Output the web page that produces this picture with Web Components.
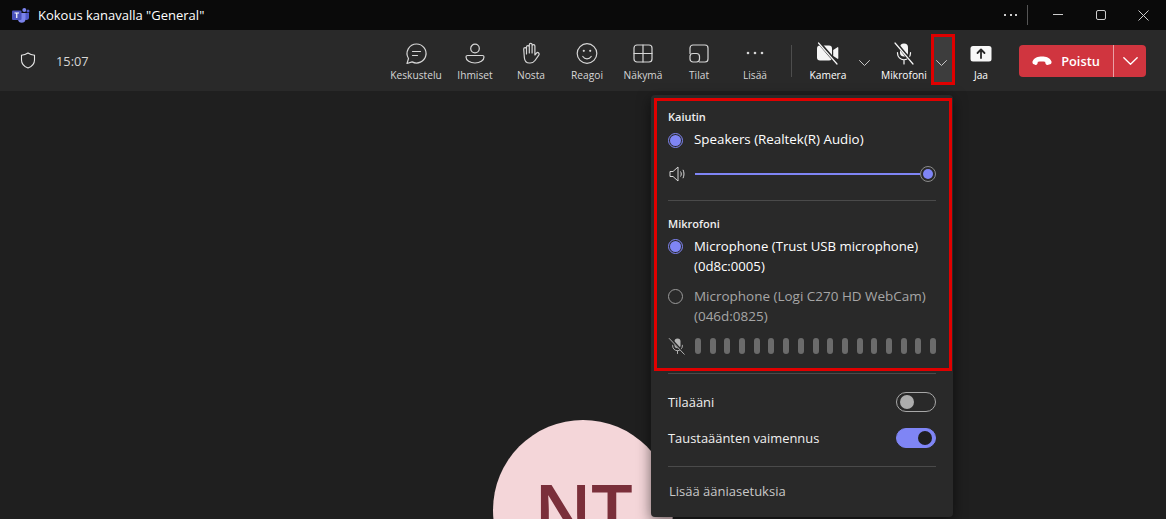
<!doctype html>
<html lang="fi"><head><meta charset="utf-8"><title>Kokous</title>
<style>
html,body{margin:0;height:100%;background:#1f1f1f;overflow:hidden}
body{font-family:"Open Sans","Noto Sans",sans-serif;color:#fff;position:relative}
teams-app{display:flex}
</style></head><body>
<teams-app></teams-app>
<script>
const I={
chat:'<path d="M12.500 2a9.500 9.500 0 1 1-4.400 17.900L3 21.500l1.500-5A9.500 9.500 0 0 1 12.500 2Z"/><path d="M8.500 9.500h8M8.500 13.500h5"/>',
people:'<circle cx="12" cy="6.500" r="4.300"/><path d="M4.500 13.500h15c.8 0 1.500.7 1.500 1.500 0 3.500-4 6-9 6s-9-2.500-9-6c0-.8.7-1.500 1.500-1.500Z"/>',
hand:'<path d="M7.500 12V5a1.400 1.400 0 0 1 2.800 0v6V2.800a1.400 1.400 0 0 1 2.800 0V11V4a1.400 1.400 0 0 1 2.800 0V13l1.600-1.900a1.500 1.500 0 0 1 2.300 2l-3.800 5.400a6 6 0 0 1-4.800 2.500h-.8c-3 0-4.700-2-5-5L4.700 7a1.400 1.400 0 0 1 2.800 0Z"/>',
smile:'<circle cx="12" cy="11.500" r="9.800"/><path d="M7.800 14.500c1 1.500 2.600 2.300 4.200 2.300s3.200-.8 4.200-2.300"/><circle cx="8.800" cy="8.800" r="1.100" fill="#d6d6d6" stroke="none"/><circle cx="15.200" cy="8.800" r="1.100" fill="#d6d6d6" stroke="none"/>',
grid:'<rect x="3" y="3" width="18" height="17" rx="3"/><path d="M12 3v17M3 11.500h18"/>',
rooms:'<path d="M6 3h12a3 3 0 0 1 3 3v11a3 3 0 0 1-3 3h-5.500M3 11.500V6a3 3 0 0 1 3-3"/><rect x="3" y="11.500" width="9.500" height="8.500" rx="3"/>',
more:'<circle cx="5" cy="11" r="1.300" fill="#d6d6d6" stroke="none"/><circle cx="12" cy="11" r="1.300" fill="#d6d6d6" stroke="none"/><circle cx="19" cy="11" r="1.300" fill="#d6d6d6" stroke="none"/>',
cam:'<rect x="1" y="3.500" width="15" height="15" rx="3" fill="#f5f5f5" stroke="none"/><path d="M17.200 8l4.300-2.800c.4-.2.800 0 .8.500v10.600c0 .5-.4.700-.8.500l-4.300-2.800Z" fill="#f5f5f5" stroke="none"/><path d="M3 .500 21.500 22" stroke="#292929" stroke-width="3.400"/><path d="M2.500 1 21 22" stroke="#f5f5f5" stroke-width="1.200"/>',
mic:'<rect x="8" y="1.500" width="8" height="13" rx="4" fill="#f5f5f5" stroke="none"/><path d="M5.500 10.500v.8a6.500 6.500 0 0 0 13 0v-.8M12 18v4" stroke="#f5f5f5"/><path d="M3.500 .500 21.500 22" stroke="#292929" stroke-width="3.200"/><path d="M3 1 21 22" stroke="#f5f5f5" stroke-width="1.200"/>',
share:'<rect x="1.500" y="4" width="21" height="15.500" rx="2.500" fill="#f7f7f7" stroke="none"/><path d="M12 16V8M8.500 11 12 7.500l3.500 3.500" stroke="#292929" stroke-width="1.800"/>'
};
const svg=(k,s=24)=>`<svg width="${s}" height="${s}" viewBox="0 0 24 24" fill="none" stroke="#d6d6d6" stroke-width="1.200" stroke-linecap="round" stroke-linejoin="round">${I[k]}</svg>`;
const chev=(w=11,c="#c8c8c8")=>`<svg width="${w}" height="${Math.round(w*.55)}" viewBox="0 0 11 6" fill="none" stroke="${c}" stroke-width="1" stroke-linecap="round" stroke-linejoin="round" style="display:block"><path d="M.5.5 5.500 5.500 10.500.5"/></svg>`;
function def(name,css,html){
  customElements.define(name,class extends HTMLElement{
    connectedCallback(){
      if(this.shadowRoot)return;
      const r=this.attachShadow({mode:"open"});
      r.innerHTML=`<style>${css}</style>`+(typeof html==="function"?html(this):html);
    }
  });
}
def("title-bar",`:host{display:flex;align-items:center;height:30px;background:#0a0a0a;box-sizing:border-box;padding-left:12px;padding-right:1px}
.t{margin-left:8px;font-size:13px;color:#fff;white-space:nowrap;flex:1;line-height:30px}
.dots{display:flex;gap:3.500px}.dots i{width:2px;height:2px;background:#ccc;display:block}
.sep{width:1px;height:20px;background:#555;margin:0 8px 0 10px}
.b{width:43px;height:30px;display:flex;align-items:center;justify-content:center}
svg{display:block}`,
`<svg width="18" height="16" viewBox="0 0 18 16"><circle cx="12.300" cy="3" r="2" fill="#7b83eb"/><circle cx="16" cy="4" r="1.500" fill="#5059c9"/><path d="M9 6h8v5a2.500 2.500 0 0 1-4 1.500H9Z" fill="#5059c9"/><path d="M6 6h7.500v6.500a3.800 3.800 0 0 1-7.500 0Z" fill="#7b83eb"/><rect x="0" y="3.500" width="9.500" height="9.500" rx="1" fill="#4b53bc"/><path d="M2.500 6h4.500M4.750 6v5" stroke="#fff" stroke-width="1.200"/></svg>
<span class="t">Kokous kanavalla "General"</span>
<span class="dots"><i></i><i></i><i></i></span><span class="sep"></span>
<span class="b"><svg width="10" height="2"><path d="M0 .5h10" stroke="#ccc"/></svg></span>
<span class="b"><svg width="10" height="10"><rect x=".5" y=".5" width="9" height="9" rx="1.500" fill="none" stroke="#ccc"/></svg></span>
<span class="b"><svg width="11" height="11"><path d="M.5.5l10 10M10.500.5l-10 10" stroke="#ccc"/></svg></span>`);
def("tool-button",`:host{display:flex;flex-direction:column;align-items:center;height:61px;box-sizing:border-box;padding-top:12px;width:var(--w,56px);flex:none}
svg{display:block;width:24px;height:24px}
.l{font-size:10.200px;line-height:14px;margin-top:2px;color:var(--c,#d6d6d6);white-space:nowrap;font-weight:var(--fw,400)}`,
h=>`${svg(h.getAttribute("icon"))}<span class="l">${h.getAttribute("label")}</span>`);
def("drop-chevron",`:host{display:flex;align-items:center;justify-content:center;width:24px;height:61px;padding-top:4px;box-sizing:border-box;flex:none}`,()=>chev(11));
def("mic-chevron",`:host{display:block;width:24px;height:51px;box-sizing:border-box;border:3px solid #e00000;margin:4px 2px 0 -1px;align-self:flex-start;background:#3d3d3d;flex:none;padding:0}
.i{display:flex;height:100%;align-items:center;justify-content:center;padding:6px 4px 0 0;box-sizing:border-box}`,()=>`<div class="i">${chev(11)}</div>`);
def("leave-button",`:host{display:flex;height:32px;width:127px;background:#d0353f;border-radius:4px;flex:none;align-items:stretch;color:#fff}
.m{flex:1;display:flex;align-items:center;justify-content:center;gap:9px;font-size:12.800px;font-weight:600}
.s{width:32px;border-left:1px solid #e9a0a5;display:flex;align-items:center;justify-content:center}
svg{display:block}`,
`<div class="m"><svg width="20" height="10" viewBox="0 0 20 10"><path d="M.5 5.500C2 1.500 6 .5 10 .5s8 1 9.500 5c.3 1-.2 2.500-1.500 2.800l-2.500.6c-1 .2-1.700-.3-2-1.300l-.4-1.800c-1.500-.5-5.700-.5-7.200 0l-.4 1.800c-.3 1-1 1.500-2 1.300L2 8.300C.7 8 .2 6.500.5 5.500Z" fill="#fff"/></svg><span>Poistu</span></div><div class="s">${chev(15,"#fff")}</div>`);
def("call-toolbar",`:host{display:flex;align-items:center;height:61px;background:#292929;padding-left:20px;padding-right:20px;box-sizing:border-box}
.time{margin-left:20px;font-size:12.800px;color:#d6d6d6;flex:1}
.sep{width:1px;height:32px;background:#4d4d4d;margin:0 12px 0 8px;flex:none}
.right{display:flex;align-items:center;flex:none}
svg.sh{display:block}
leave-button{margin-left:14px}`,
`<svg class="sh" width="16" height="17" viewBox="0 0 16 17" fill="none" stroke="#e6e6e6" stroke-width="1.100"><path d="M8 1c2 1.300 4 2 6.500 2.300V8c0 4-2.500 6.500-6.500 8-4-1.500-6.500-4-6.500-8V3.300C4 3 6 2.300 8 1Z"/></svg>
<span class="time">15:07</span>
<div class="right">
<tool-button icon="chat" label="Keskustelu" style="--w:62px"></tool-button>
<tool-button icon="people" label="Ihmiset"></tool-button>
<tool-button icon="hand" label="Nosta"></tool-button>
<tool-button icon="smile" label="Reagoi"></tool-button>
<tool-button icon="grid" label="Näkymä"></tool-button>
<tool-button icon="rooms" label="Tilat"></tool-button>
<tool-button icon="more" label="Lisää"></tool-button>
<span class="sep"></span>
<tool-button icon="cam" label="Kamera" style="--w:48px;--c:#fff;--fw:500"></tool-button>
<drop-chevron></drop-chevron>
<tool-button icon="mic" label="Mikrofoni" style="--c:#fff;--fw:500"></tool-button>
<mic-chevron></mic-chevron>
<tool-button icon="share" label="Jaa" style="--w:48px;--c:#fff;--fw:500"></tool-button>
<leave-button></leave-button>
</div>`);
def("radio-row",`:host{display:flex;gap:11px;align-items:flex-start;font-size:var(--fs,13.350px);line-height:20px;color:var(--c,#fff);font-weight:var(--fw,500)}
.r{width:15px;height:15px;border-radius:50%;box-sizing:border-box;border:1px solid #9a9a9a;margin-top:var(--rt,2.500px);flex:none;display:flex;align-items:center;justify-content:center}
:host([on]) .r{border-color:#7f85f5}
:host([on]) .r::after{content:"";width:11px;height:11px;border-radius:50%;background:#7f85f5}`,
`<span class="r"></span><span><slot></slot></span>`);
def("volume-slider",`:host{display:flex;align-items:center;gap:8px;height:16px}
svg{display:block;flex:none;margin-left:1px}
.t{flex:1;height:2px;background:#7f85f5;margin-right:-8px}
.k{width:16px;height:16px;box-sizing:border-box;border:1px solid #8a8a8a;border-radius:50%;display:flex;align-items:center;justify-content:center;background:#292929;flex:none;position:relative}
.k::after{content:"";width:10px;height:10px;background:#7f85f5;border-radius:50%}`,
`<svg width="18" height="16" viewBox="0 0 18 16" fill="none" stroke="#d6d6d6" stroke-width="1"><path d="M1 5.500v5h3l5 4.500V1l-5 4.500Z"/><path d="M11.500 5.500c1 1.500 1 3.500 0 5M14 3.800c1.300 2.500 1.300 5.900 0 8.400"/></svg><span class="t"></span><span class="k"></span>`);
def("level-meter",`:host{display:flex;align-items:center;justify-content:space-between;height:18px}
svg{display:block;flex:none;margin-right:8px}
.bars{display:flex;justify-content:space-between;flex:1}
i{display:block;width:6px;height:16px;border-radius:3px;background:#6b6b6b}`,
`<svg width="19" height="18" viewBox="0 0 24 24" fill="none" stroke="#b5b5b5" stroke-width="1.300" stroke-linecap="round"><rect x="8" y="2" width="8" height="13" rx="4" fill="#b5b5b5" stroke="none"/><path d="M5.500 11v.8a6.500 6.500 0 0 0 13 0V11M12 18.500V22"/><path d="M1.500 1 22 23" stroke="#292929" stroke-width="3"/><path d="M1 2 21 23"/></svg><div class="bars">${"<i></i>".repeat(17)}</div>`);
def("toggle-row",`:host{display:flex;align-items:center;justify-content:space-between;height:20px;font-size:12.900px;color:#f0f0f0}
.s{width:40px;height:20px;border-radius:10px;box-sizing:border-box;border:1px solid #a8a8a8;display:flex;align-items:center;padding:0 3px}
.s::after{content:"";width:14px;height:14px;border-radius:50%;background:#adadad}
:host([on]) .s{background:#7f85f5;border-color:#7f85f5;justify-content:flex-end}
:host([on]) .s::after{background:#1f1f1f}`,
`<span><slot></slot></span><span class="s"></span>`);
def("audio-popup",`:host{position:absolute;left:651px;top:95px;width:302px;height:422px;background:#292929;border-radius:4px;box-shadow:0 4px 14px rgba(0,0,0,.55);box-sizing:border-box;padding:3px 1px 0 3px;z-index:2}
.box{border:3px solid #e00000;height:273px;box-sizing:border-box;padding:8px 13px 0 11px}
h3{margin:0;font-size:11px;line-height:16px;font-weight:600;color:#f0f0f0}
hr{border:0;height:1px;background:#4a4a4a;margin:0}
.low{padding:2px 16px 0 14px}
a{display:block;margin-top:14px;font-size:13px;line-height:20px;color:#c8c8c8;padding-left:1px}`,
`<div class="box">
<h3>Kaiutin</h3>
<radio-row on style="margin-top:4px;--rt:3.500px">Speakers (Realtek(R) Audio)</radio-row>
<volume-slider style="margin-top:17px"></volume-slider>
<hr style="margin-top:18px">
<h3 style="margin-top:15px">Mikrofoni</h3>
<radio-row on style="margin-top:4px;--fs:13.180px">Microphone (Trust USB microphone)<br>(0d8c:0005)</radio-row>
<radio-row style="margin-top:10px;--c:#a6a6a6;--fw:400;--fs:13.470px">Microphone (Logi C270 HD WebCam)<br>(046d:0825)</radio-row>
<level-meter style="margin-top:11px"></level-meter>
</div>
<div class="low">
<hr>
<toggle-row style="margin-top:18px">Tilaääni</toggle-row>
<toggle-row on style="margin-top:16px">Taustaäänten vaimennus</toggle-row>
<hr style="margin-top:18px">
<a>Lisää ääniasetuksia</a>
</div>`);
def("meeting-stage",`:host{display:flex;justify-content:center;height:428px;overflow:hidden;background:#1f1f1f;box-sizing:border-box;padding-top:329px}
.a{width:180px;height:180px;border-radius:50%;background:#f4d6d9;color:#7a2f3a;font-size:74px;line-height:180px;text-align:center;font-weight:600;flex:none;letter-spacing:-1px}`,
`<div class="a">NT</div>`);
def("teams-app",`:host{display:flex;flex-direction:column;width:1166px;height:519px;position:relative;overflow:hidden}`,
`<title-bar></title-bar><call-toolbar></call-toolbar><meeting-stage></meeting-stage><audio-popup></audio-popup>`);
</script>
</body></html>
